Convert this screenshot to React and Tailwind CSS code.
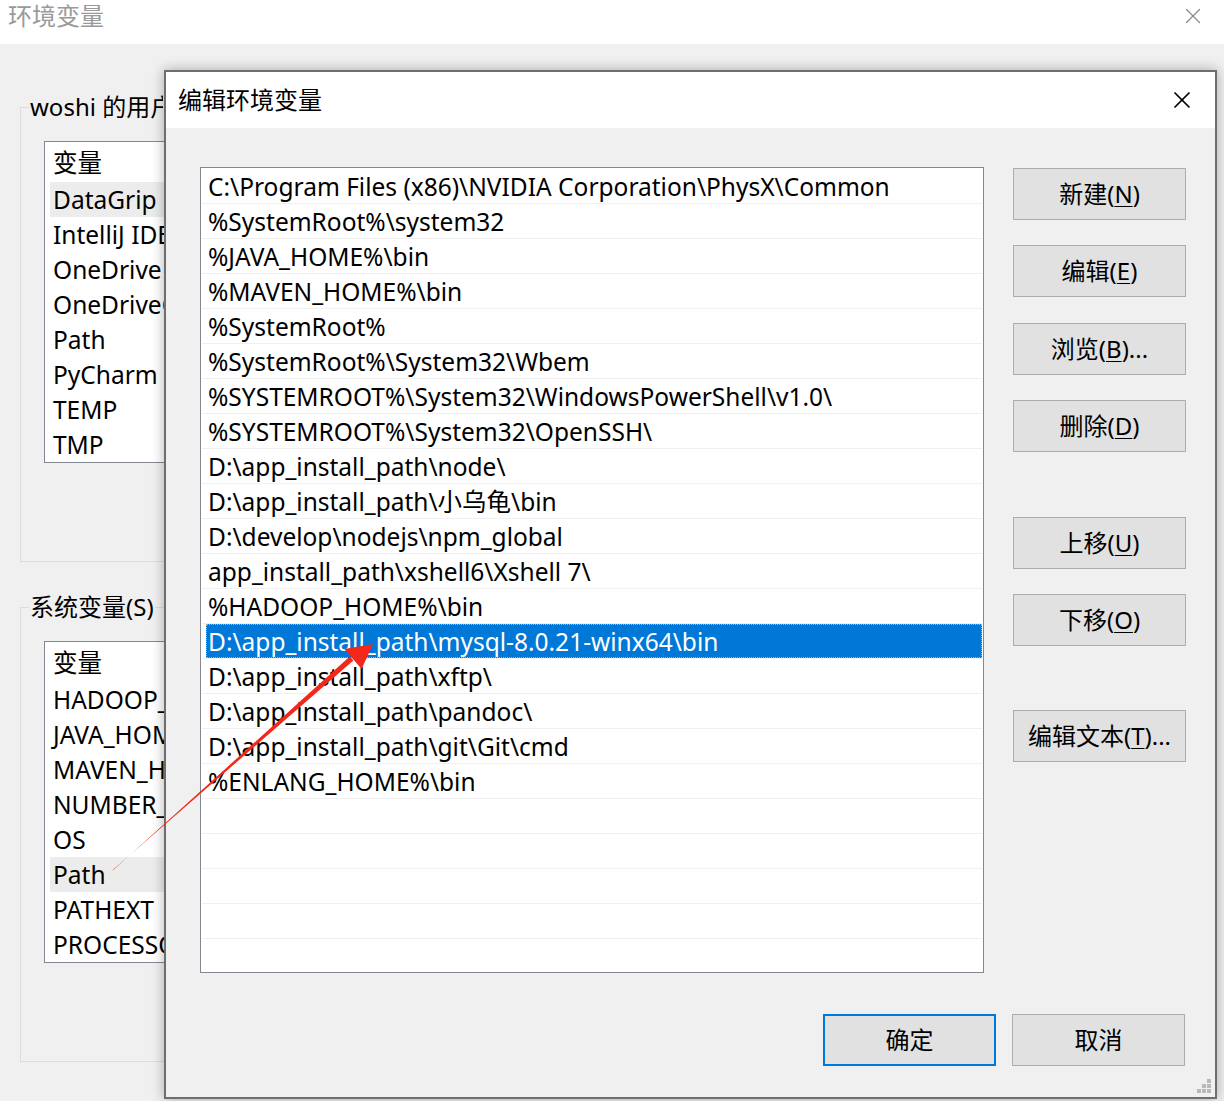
import { X } from "lucide-react";

const userVars = ["DataGrip", "IntelliJ IDEA", "OneDrive", "OneDriveConsumer", "Path", "PyCharm", "TEMP", "TMP"];
const sysVars = ["HADOOP_HOME", "JAVA_HOME", "MAVEN_HOME", "NUMBER_OF_PROCESSORS", "OS", "Path", "PATHEXT", "PROCESSOR_ARCHITECTURE"];

const paths = [
  "C:\\Program Files (x86)\\NVIDIA Corporation\\PhysX\\Common",
  "%SystemRoot%\\system32",
  "%JAVA_HOME%\\bin",
  "%MAVEN_HOME%\\bin",
  "%SystemRoot%",
  "%SystemRoot%\\System32\\Wbem",
  "%SYSTEMROOT%\\System32\\WindowsPowerShell\\v1.0\\",
  "%SYSTEMROOT%\\System32\\OpenSSH\\",
  "D:\\app_install_path\\node\\",
  "D:\\app_install_path\\小乌龟\\bin",
  "D:\\develop\\nodejs\\npm_global",
  "app_install_path\\xshell6\\Xshell 7\\",
  "%HADOOP_HOME%\\bin",
  "D:\\app_install_path\\mysql-8.0.21-winx64\\bin",
  "D:\\app_install_path\\xftp\\",
  "D:\\app_install_path\\pandoc\\",
  "D:\\app_install_path\\git\\Git\\cmd",
  "%ENLANG_HOME%\\bin",
];

const SELECTED = 13;
const TOTAL_ROWS = 23;

// the parent window's lists sit under the dialog, only the left strip shows
function VarList({ items, active }) {
  return (
    <div className="w-[122px] h-[322px] border border-r-0 border-[#828790] bg-white overflow-hidden text-[24.5px]">
      <div className="h-[40px] pl-[8px] pt-[3px] flex items-center">变量</div>
      {items.map((name, i) => (
        <div key={name} className={`h-[35px] ml-[5px] pl-[3px] pt-[2px] flex items-center whitespace-nowrap ${i === active ? "bg-[#ececec]" : ""}`}>
          {name}
        </div>
      ))}
    </div>
  );
}

function Group({ label, children, className }) {
  return (
    <fieldset className={`border border-[#dcdcdc] pl-[8px] pr-0 ${className}`}>
      <legend className="px-[1px] leading-[30px] max-w-[134px] overflow-hidden whitespace-nowrap">{label}</legend>
      {children}
    </fieldset>
  );
}

function Btn({ children, primary }) {
  return (
    <button
      className={`w-[173px] h-[52px] bg-[#e1e1e1] flex items-center justify-center ${
        primary ? "border-2 border-[#0078d7]" : "border border-[#adadad]"
      }`}
    >
      {children}
    </button>
  );
}

function Key({ k }) {
  return <u className="underline-offset-[3px] decoration-1">{k}</u>;
}

function ResizeGrip() {
  const dots = [
    [10, 0],
    [5, 5],
    [10, 5],
    [0, 10],
    [5, 10],
    [10, 10],
  ];
  return (
    <svg width="14" height="14" viewBox="0 0 14 14">
      {dots.map(([x, y]) => (
        <rect key={`${x}-${y}`} x={x} y={y} width="4" height="4" fill="#b9b9b9" />
      ))}
    </svg>
  );
}

export default function App() {
  return (
    <div className="relative w-[1224px] h-[1101px] overflow-hidden bg-[#f0f0f0] text-[24px] text-black font-['Noto_Sans','Noto_Sans_CJK_SC',sans-serif]">
      {/* parent window */}
      <div className="h-[44px] bg-white flex items-start justify-between pl-[8px] pr-[18px]">
        <span className="text-[#9a9a9a] leading-[32px]">环境变量</span>
        <div className="h-[32px] flex items-center">
          <X size={26} strokeWidth={1.1} className="text-[#8a8a8a]" />
        </div>
      </div>
      <div className="pl-[20px] pt-[48px]">
        <Group label="woshi 的用户变量(U)" className="w-[1180px] h-[470px]">
          <div className="ml-[15px] mt-[19px]">
            <VarList items={userVars} active={0} />
          </div>
        </Group>
        <Group label="系统变量(S)" className="w-[1180px] h-[470px] mt-[30px]">
          <div className="ml-[15px] mt-[19px]">
            <VarList items={sysVars} active={5} />
          </div>
        </Group>
      </div>

      {/* edit dialog */}
      <div className="absolute left-[164px] top-[70px] w-[1053px] h-[1029px] border-2 border-[#6e6e6e] bg-[#f0f0f0] shadow-[0_0_12px_rgba(0,0,0,0.3)] flex flex-col">
        <div className="h-[56px] bg-white flex items-center justify-between pl-[12px] pr-[19px]">
          <span>编辑环境变量</span>
          <X size={28} strokeWidth={1.5} />
        </div>
        <div className="flex pl-[34px] pt-[39px] gap-[29px]">
          <div className="w-[784px] h-[806px] border border-[#828790] bg-white overflow-hidden px-[1px] pt-[1px] text-[24.5px]">
            {Array.from({ length: TOTAL_ROWS }).map((_, i) => (
              <div key={i} className="h-[35px] border-b border-[#f0f0f0] pl-[1px]">
                {i === SELECTED ? (
                  <div className="ml-[3px] h-[34px] bg-[#0078d7] text-white pl-[2px] pt-[2px] flex items-center outline-1 outline-dotted outline-[#d9a777] -outline-offset-1 whitespace-nowrap">
                    {paths[i]}
                  </div>
                ) : (
                  <div className="ml-[3px] h-[34px] pl-[2px] pt-[2px] flex items-center whitespace-nowrap">{paths[i] || ""}</div>
                )}
              </div>
            ))}
          </div>
          <div className="flex flex-col pt-[1px]">
            <Btn>新建(<Key k="N" />)</Btn>
            <div className="mt-[25px]"><Btn>编辑(<Key k="E" />)</Btn></div>
            <div className="mt-[26px]"><Btn>浏览(<Key k="B" />)...</Btn></div>
            <div className="mt-[25px]"><Btn>删除(<Key k="D" />)</Btn></div>
            <div className="mt-[65px]"><Btn>上移(<Key k="U" />)</Btn></div>
            <div className="mt-[25px]"><Btn>下移(<Key k="O" />)</Btn></div>
            <div className="mt-[64px]"><Btn>编辑文本(<Key k="T" />)...</Btn></div>
          </div>
        </div>
        <div className="flex justify-end gap-[16px] pr-[30px] mt-[41px]">
          <Btn primary>确定</Btn>
          <Btn>取消</Btn>
        </div>
        <div className="flex justify-end pr-[4px] mt-auto pb-[4px]">
          <ResizeGrip />
        </div>
      </div>

      {/* annotation arrow */}
      <svg className="absolute left-0 top-0 pointer-events-none" width="1224" height="1101">
        <polygon points="112.2,871.1 113.8,868.9 353.4,660.6 349.7,656.4" fill="#f2281c" />
        <polygon points="373,644 361.6,668.9 344.3,649.1" fill="#f2281c" />
      </svg>
    </div>
  );
}
